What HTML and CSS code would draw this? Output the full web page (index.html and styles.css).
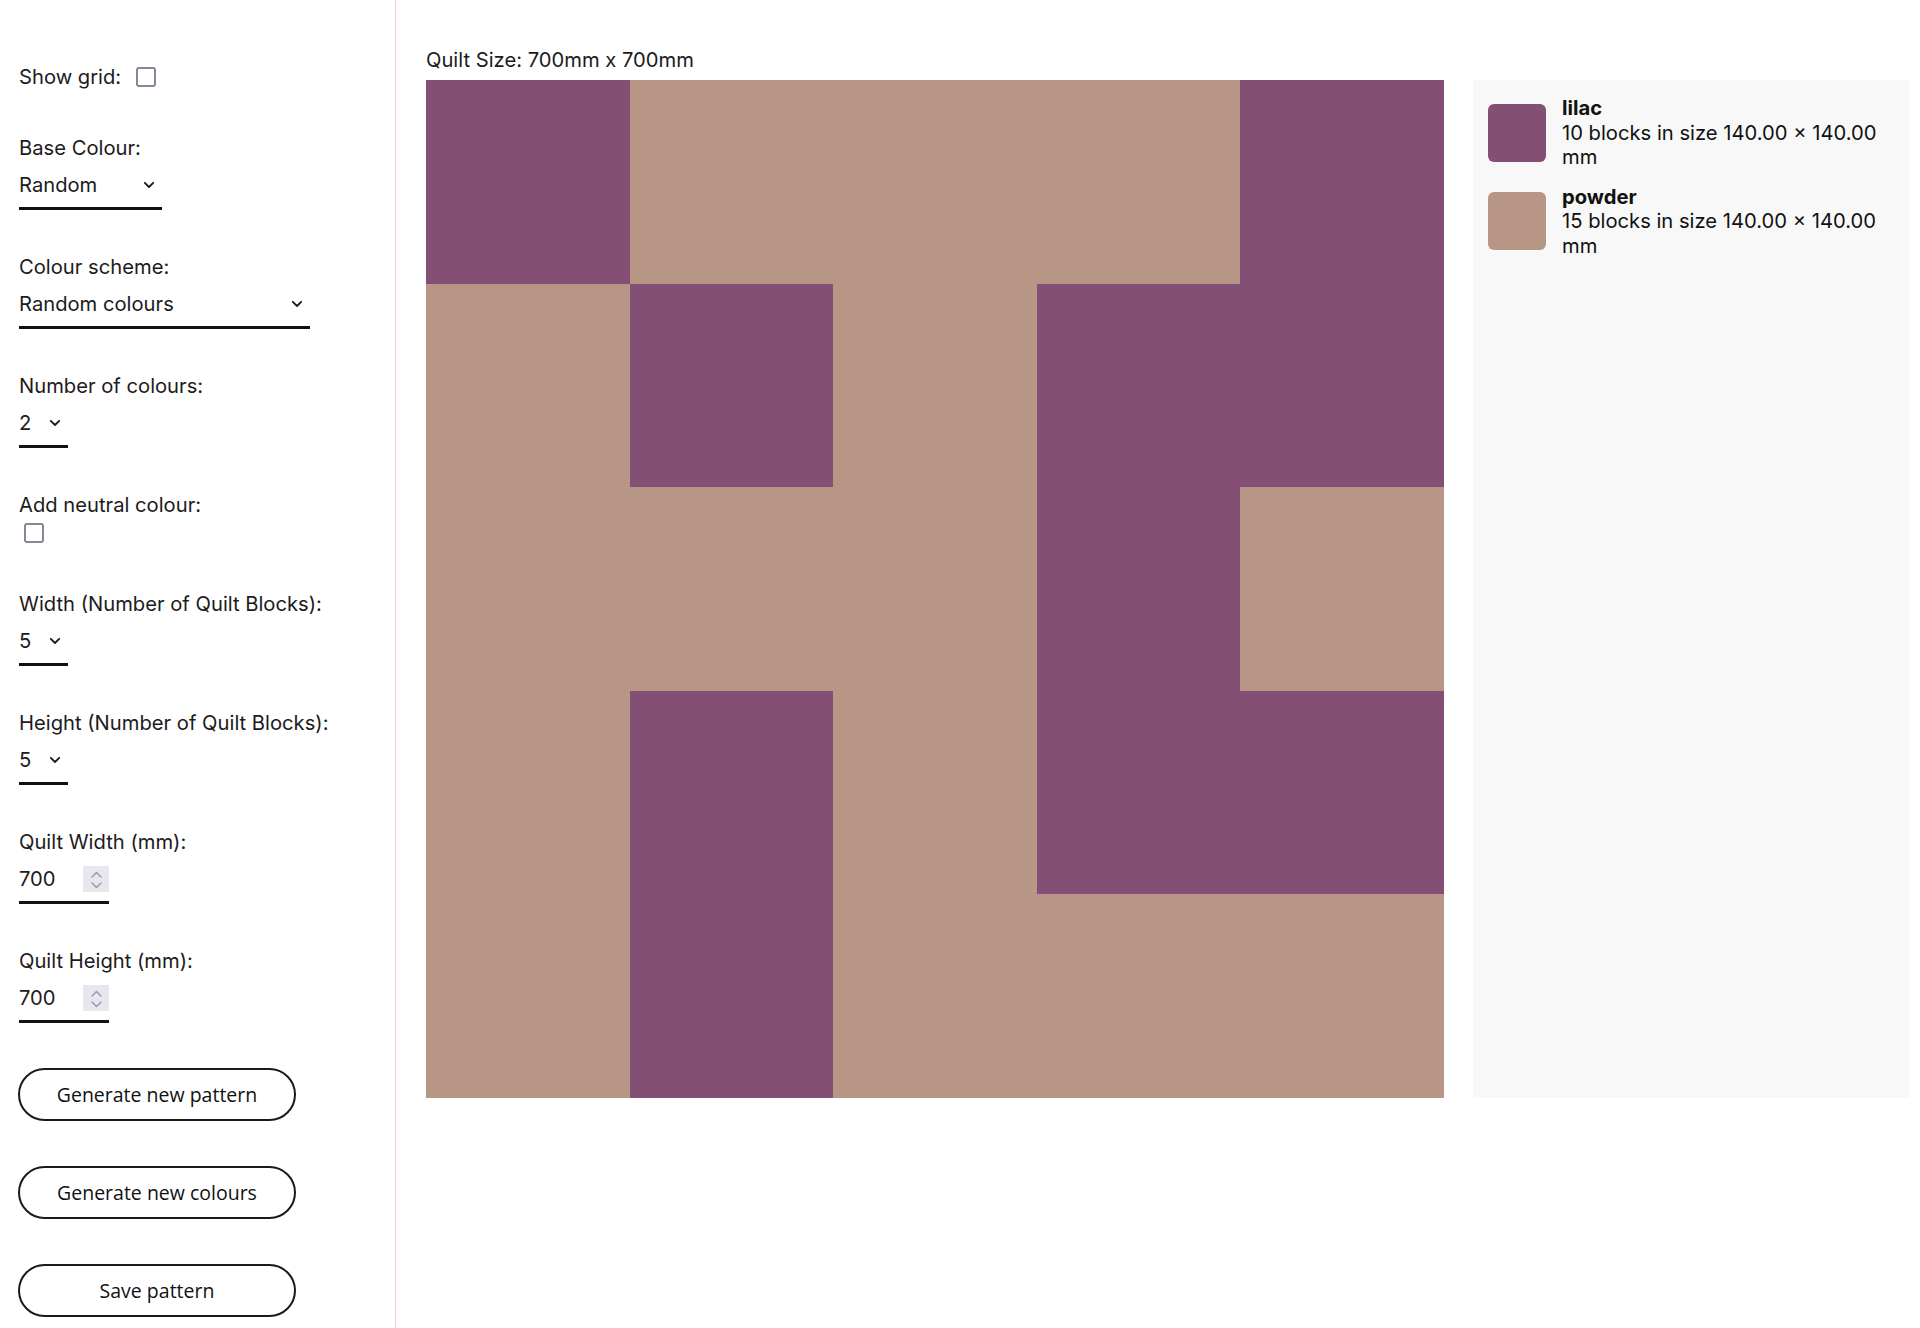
FILE: index.html
```html
<!DOCTYPE html>
<html lang="en">
<head>
<meta charset="utf-8">
<title>Quilt Pattern Generator</title>
<link rel="stylesheet" href="styles.css">
</head>
<body>
<div class="app">
  <aside class="sidebar">
    <div class="row-check">
      <label for="grid">Show grid:</label>
      <input type="checkbox" id="grid" class="check">
    </div>

    <div class="field">
      <label class="label">Base Colour:</label>
      <div class="select w-base">
        <select><option>Random</option></select>
        <svg class="chev" viewBox="0 0 12 8"><path d="M1.8 1.8 L6 6 L10.2 1.8"/></svg>
      </div>
    </div>

    <div class="field">
      <label class="label">Colour scheme:</label>
      <div class="select w-scheme">
        <select><option>Random colours</option></select>
        <svg class="chev" viewBox="0 0 12 8"><path d="M1.8 1.8 L6 6 L10.2 1.8"/></svg>
      </div>
    </div>

    <div class="field">
      <label class="label">Number of colours:</label>
      <div class="select w-num">
        <select><option>2</option></select>
        <svg class="chev" viewBox="0 0 12 8"><path d="M1.8 1.8 L6 6 L10.2 1.8"/></svg>
      </div>
    </div>

    <div class="field field-check">
      <label class="label" for="neutral">Add neutral colour:</label>
      <input type="checkbox" id="neutral" class="check check-block">
    </div>

    <div class="field">
      <label class="label">Width (Number of Quilt Blocks):</label>
      <div class="select w-num">
        <select><option>5</option></select>
        <svg class="chev" viewBox="0 0 12 8"><path d="M1.8 1.8 L6 6 L10.2 1.8"/></svg>
      </div>
    </div>

    <div class="field">
      <label class="label">Height (Number of Quilt Blocks):</label>
      <div class="select w-num">
        <select><option>5</option></select>
        <svg class="chev" viewBox="0 0 12 8"><path d="M1.8 1.8 L6 6 L10.2 1.8"/></svg>
      </div>
    </div>

    <div class="field">
      <label class="label">Quilt Width (mm):</label>
      <div class="number">
        <input type="text" value="700">
        <span class="spin"><svg viewBox="0 0 26 26"><path d="M9 11 L13.5 6.5 L18 11"/><path d="M9 17 L13.5 21.5 L18 17"/></svg></span>
      </div>
    </div>

    <div class="field">
      <label class="label">Quilt Height (mm):</label>
      <div class="number">
        <input type="text" value="700">
        <span class="spin"><svg viewBox="0 0 26 26"><path d="M9 11 L13.5 6.5 L18 11"/><path d="M9 17 L13.5 21.5 L18 17"/></svg></span>
      </div>
    </div>

    <div class="buttons">
      <button class="btn">Generate new pattern</button>
      <button class="btn">Generate new colours</button>
      <button class="btn">Save pattern</button>
    </div>
  </aside>

  <main class="main">
    <p class="caption">Quilt Size: 700mm x 700mm</p>
    <div class="stage">
      <div class="quilt">
        <div class="cell lilac"></div><div class="cell powder"></div><div class="cell powder"></div><div class="cell powder"></div><div class="cell lilac"></div>
        <div class="cell powder"></div><div class="cell lilac"></div><div class="cell powder"></div><div class="cell lilac"></div><div class="cell lilac"></div>
        <div class="cell powder"></div><div class="cell powder"></div><div class="cell powder"></div><div class="cell lilac"></div><div class="cell powder"></div>
        <div class="cell powder"></div><div class="cell lilac"></div><div class="cell powder"></div><div class="cell lilac"></div><div class="cell lilac"></div>
        <div class="cell powder"></div><div class="cell lilac"></div><div class="cell powder"></div><div class="cell powder"></div><div class="cell powder"></div>
      </div>
      <div class="legend">
        <div class="legend-item">
          <span class="swatch lilac"></span>
          <div class="legend-text">
            <div class="legend-name">lilac</div>
            <div>10 blocks in size 140.00 × 140.00 mm</div>
          </div>
        </div>
        <div class="legend-item">
          <span class="swatch powder"></span>
          <div class="legend-text">
            <div class="legend-name">powder</div>
            <div>15 blocks in size 140.00 × 140.00 mm</div>
          </div>
        </div>
      </div>
    </div>
  </main>
</div>
</body>
</html>
```

FILE: styles.css
```css
* { box-sizing: border-box; }

html, body {
  margin: 0;
  padding: 0;
  background: #ffffff;
}

body {
  font-family: "Inter", "Liberation Sans", sans-serif;
  font-size: 20.2px;
  line-height: 24px;
  color: #1d1b20;
}

.app {
  display: flex;
  min-height: 1328px;
}

/* ---------- sidebar ---------- */
.sidebar {
  flex: none;
  width: 396px;
  border-right: 1.5px solid #f7c9e1;
  padding: 0 19px;
  display: flex;
  flex-direction: column;
  align-items: flex-start;
}

.row-check {
  display: flex;
  align-items: center;
  height: 24px;
  margin-top: 65px;
  margin-bottom: 47px;
}

.row-check label { display: block; }

.check {
  appearance: none;
  -webkit-appearance: none;
  width: 20px;
  height: 20px;
  margin: 0 0 0 15px;
  border: 2px solid #8a8596;
  border-radius: 3px;
  background: #fff;
}

.field {
  display: flex;
  flex-direction: column;
  align-items: flex-start;
  margin-bottom: 45px;
}

.label {
  display: block;
  height: 24px;
  line-height: 24px;
  margin-bottom: 2px;
}

.field-check { margin-bottom: 49px; }

.check-block {
  margin: 4px 0 0 5px;
}

.select {
  display: flex;
  align-items: center;
  height: 48px;
  border-bottom: 3px solid #111;
}

.select select {
  appearance: none;
  -webkit-appearance: none;
  flex: 1;
  min-width: 0;
  border: 0;
  padding: 0;
  margin: 0;
  background: transparent;
  font: inherit;
  color: #1d1b20;
  outline: none;
}

.chev {
  flex: none;
  width: 12px;
  height: 8px;
  margin-right: 7px;
  margin-top: 1px;
}

.chev path {
  fill: none;
  stroke: #1d1b20;
  stroke-width: 1.8;
  stroke-linecap: round;
  stroke-linejoin: round;
}

.w-base { width: 143px; }
.w-scheme { width: 291px; }
.w-num { width: 49px; }

.number {
  display: flex;
  align-items: center;
  width: 90px;
  height: 48px;
  border-bottom: 3px solid #111;
}

.number input {
  flex: 1;
  min-width: 0;
  border: 0;
  padding: 0;
  margin: 0;
  background: transparent;
  font: inherit;
  color: #1d1b20;
  outline: none;
}

.spin {
  flex: none;
  width: 26px;
  height: 26px;
  background: #e8e6ee;
  display: flex;
}

.spin svg { width: 26px; height: 26px; }

.spin path {
  fill: none;
  stroke: #a09cab;
  stroke-width: 1.5;
  stroke-linecap: round;
  stroke-linejoin: round;
}

.buttons {
  display: flex;
  flex-direction: column;
  gap: 45px;
  margin-top: 0;
}

.btn {
  width: 278px;
  height: 53px;
  margin-left: -1px;
  border: 2.5px solid #1a1a1a;
  border-radius: 27px;
  background: #fff;
  font-family: "Open Sans", "Noto Sans", sans-serif;
  font-size: 19.5px;
  color: #111;
  padding: 0;
}

/* ---------- main ---------- */
.main {
  flex: 1;
  padding: 48px 10px 0 30px;
}

.caption {
  margin: 0 0 8px;
  line-height: 24px;
}

.stage {
  display: flex;
  align-items: stretch;
  gap: 29px;
}

.quilt {
  flex: none;
  width: 1018px;
  height: 1018px;
  display: grid;
  grid-template-columns: repeat(5, 1fr);
  grid-template-rows: repeat(5, 1fr);
}

.lilac { background: #844f75; }
.powder { background: #b79685; }

.legend {
  flex: 1;
  background: #f8f8f8;
  padding: 16px 15px;
  display: flex;
  flex-direction: column;
  gap: 15px;
}

.legend-item {
  display: flex;
  align-items: center;
  gap: 16px;
}

.swatch {
  flex: none;
  width: 58px;
  height: 58px;
  border-radius: 6px;
}

.legend-text {
  line-height: 24.5px;
  color: #111;
}

.legend-name {
  font-weight: 700;
}
```
